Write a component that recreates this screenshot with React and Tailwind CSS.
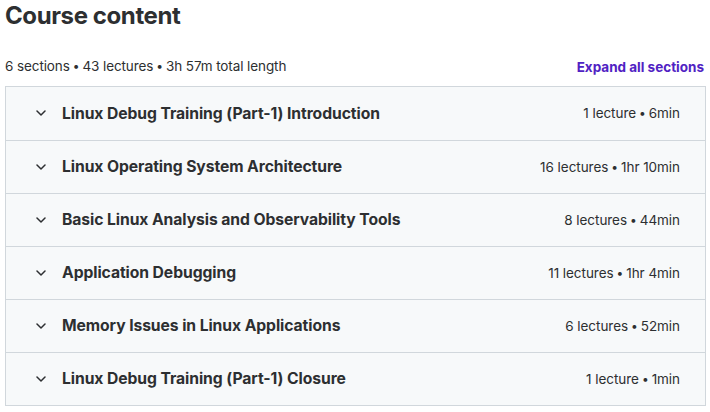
import React from 'react';

const sections = [
  { title: 'Linux Debug Training (Part-1) Introduction', lectures: '1 lecture', time: '6min' },
  { title: 'Linux Operating System Architecture', lectures: '16 lectures', time: '1hr 10min' },
  { title: 'Basic Linux Analysis and Observability Tools', lectures: '8 lectures', time: '44min' },
  { title: 'Application Debugging', lectures: '11 lectures', time: '1hr 4min' },
  { title: 'Memory Issues in Linux Applications', lectures: '6 lectures', time: '52min' },
  { title: 'Linux Debug Training (Part-1) Closure', lectures: '1 lecture', time: '1min' },
];

const Chevron = () => (
  <svg width="10" height="6" viewBox="0 0 10 6" fill="none" className="shrink-0">
    <path d="M1 1l4 4 4-4" stroke="#2d2f31" strokeWidth="1.5" strokeLinecap="round" strokeLinejoin="round" />
  </svg>
);

// small bullet, like the reference font's narrow dot
const Dot = () => <span className="text-[12px] mx-[3px] relative top-[-1px]">•</span>;

export default function App() {
  return (
    <div className="w-[710px] h-[412px] bg-white text-[#2d2f31] overflow-hidden" style={{ fontFamily: 'Inter, "Liberation Sans", sans-serif' }}>
      <h2 className="pl-[5px] pt-[1px] text-[24px] leading-[30px] font-bold tracking-[-0.4px]">Course content</h2>

      <div className="flex items-end justify-between pl-[5px] pr-[6px] mt-[26px] h-[20px]">
        <span className="text-[13.5px] leading-[20px] tracking-[-0.1px]">
          6 sections<Dot />43 lectures<Dot />3h 57m total length
        </span>
        <button className="text-[13.5px] leading-[20px] font-bold text-[#5022c3]">Expand all sections</button>
      </div>

      <div className="mt-[9px] ml-[5px] w-[701px] border border-[#d1d7dc]">
        {sections.map((s, i) => (
          <div
            key={i}
            className={`flex items-center justify-between h-[53px] pl-[30px] pr-[25px] bg-[#f7f9fa] ${i > 0 ? 'border-t border-[#d1d7dc]' : ''}`}
          >
            <div className="flex items-center gap-[16px]">
              <Chevron />
              <span className="text-[15.7px] font-bold tracking-[-0.08px]">{s.title}</span>
            </div>
            <span className="text-[13.5px] tracking-[-0.05px]">
              {s.lectures}<Dot />{s.time}
            </span>
          </div>
        ))}
      </div>
    </div>
  );
}
